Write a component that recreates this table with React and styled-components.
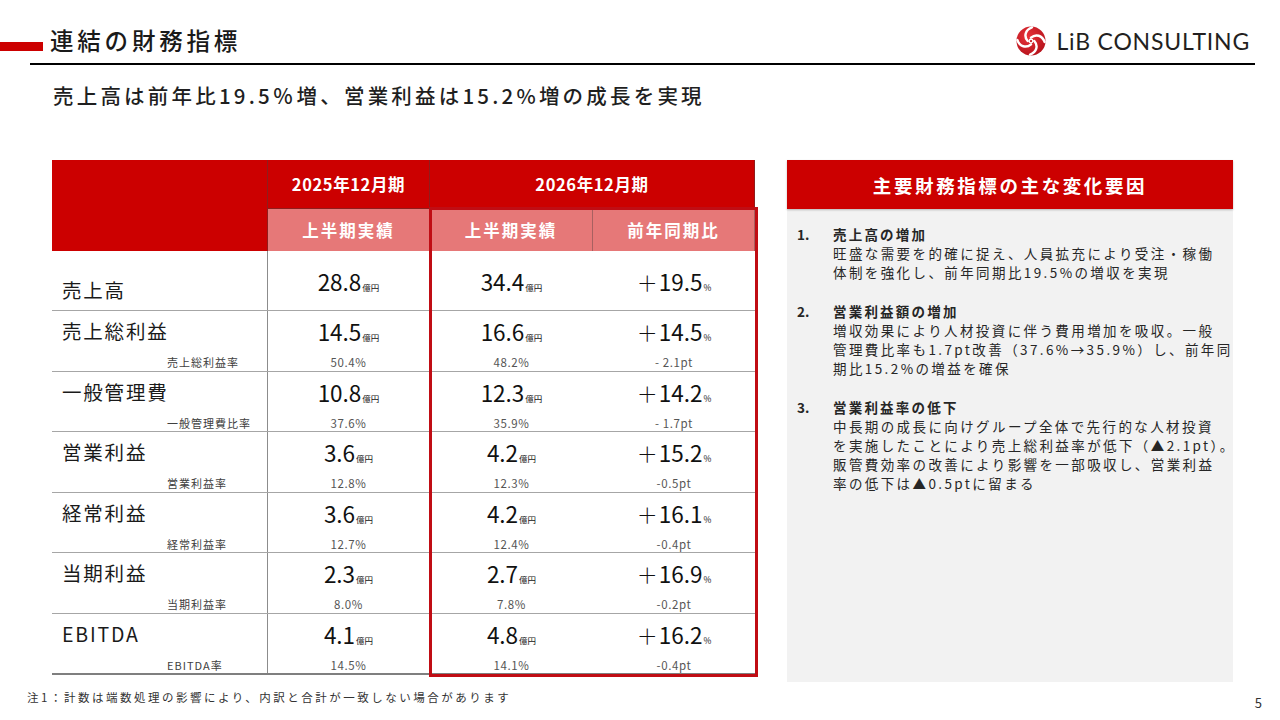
import React from "react";
import styled, { createGlobalStyle } from "styled-components";

const Global = createGlobalStyle`
  * { box-sizing: border-box; }
  html, body { margin: 0; padding: 0; background: #fff; }
  body { font-family: "Noto Sans CJK JP", "Noto Sans", sans-serif; color: #262626; }
`;

const Page = styled.div`
  width: 1280px;
  height: 720px;
  overflow: hidden;
  background: #fff;
  display: flex;
  flex-direction: column;
  position: relative;
`;

const Header = styled.header`
  height: 63px;
  display: flex;
  align-items: flex-start;
`;

const RedBar = styled.div`
  width: 43px;
  height: 9px;
  margin-top: 42px;
  background: #cc0000;
  flex: none;
`;

const Title = styled.h1`
  margin: 24px 0 0 7px;
  font-size: 23.5px;
  line-height: 32px;
  font-weight: 500;
  letter-spacing: 3.8px;
  color: #1a1a1a;
`;

const Logo = styled.div`
  margin: 26px 30px 0 auto;
  display: flex;
  align-items: center;
  gap: 10px;
  height: 30px;
`;

const LogoText = styled.span`
  font-family: "Lato", "Liberation Sans", sans-serif;
  font-size: 23px;
  letter-spacing: 0.8px;
  color: #231f20;
  line-height: 30px;
`;

const Rule = styled.div`
  margin-left: 30px;
  width: 1225px;
  height: 2px;
  background: #000;
`;

const Subtitle = styled.h2`
  margin: 15px 0 0 53px;
  font-size: 20.5px;
  line-height: 30px;
  font-weight: 500;
  letter-spacing: 3.2px;
  color: #1f1f1f;
`;

const Content = styled.main`
  margin-top: 50px;
  padding-left: 52px;
  display: flex;
  gap: 32px;
  align-items: flex-start;
`;

const TableWrap = styled.div`
  position: relative;
  width: 703px;
`;

const HeadGrid = styled.div`
  display: grid;
  grid-template-columns: 216px 162px 163px 162px;
  grid-template-rows: 48px 43px;
`;

const HeadCell = styled.div`
  grid-column: ${(p) => p.$col};
  grid-row: ${(p) => p.$row};
  background: ${(p) => (p.$light ? "#e67878" : "#cc0000")};
  color: #fff;
  display: flex;
  align-items: center;
  justify-content: center;
  font-weight: 700;
  font-size: 16.5px;
  letter-spacing: ${(p) => (p.$light ? "2px" : "0.6px")};
  border-right: 1px solid ${(p) => (p.$light ? "#a86060" : "#8f1d1d")};
  border-top: ${(p) => (p.$row === "2" ? "1px solid #8f1d1d" : "none")};
`;

const DataRow = styled.div`
  display: grid;
  grid-template-columns: 216px 162px 163px 162px;
  height: ${(p) => p.$h}px;
  border-bottom: ${(p) => (p.$last ? "2px solid #7f7f7f" : "1px solid #a6a6a6")};
`;

const LabelCell = styled.div`
  border-right: 1px solid #8c8c8c;
  display: flex;
  flex-direction: column;
  padding-left: 10px;
`;

const Label = styled.div`
  margin-top: ${(p) => (p.$single ? "24px" : "5px")};
  font-size: 19.5px;
  line-height: 30px;
  letter-spacing: 1.8px;
  color: #1a1a1a;
`;

const SubLabel = styled.div`
  margin-top: 8px;
  padding-left: 105px;
  font-size: 11px;
  line-height: 16px;
  letter-spacing: 1px;
  color: #404040;
`;

const ValCell = styled.div`
  border-right: ${(p) => (p.$sep ? "1px solid #8c8c8c" : "none")};
  display: flex;
  flex-direction: column;
  align-items: center;
  justify-content: ${(p) => (p.$single ? "center" : "flex-start")};
`;

const Value = styled.div`
  margin-top: ${(p) => (p.$single ? "0" : "5px")};
  height: 30px;
  line-height: 30px;
  font-size: 22.5px;
  color: #111;
  white-space: nowrap;
`;

const Plus = styled.span`
  font-size: 21px;
  font-weight: 300;
  margin-right: 1px;
`;

const Unit = styled.span`
  font-size: 8.5px;
  margin-left: 1px;
  letter-spacing: 0;
`;

const SubValue = styled.div`
  margin-top: 8px;
  font-size: 11.5px;
  line-height: 16px;
  letter-spacing: 0.6px;
  color: #555;
`;

const Highlight = styled.div`
  position: absolute;
  left: 377px;
  top: 47px;
  width: 329px;
  height: 470px;
  border: 3px solid #c00d14;
  pointer-events: none;
`;

const Panel = styled.aside`
  width: 446px;
  display: flex;
  flex-direction: column;
`;

const PanelHead = styled.div`
  height: 49px;
  background: #cc0000;
  color: #fff;
  display: flex;
  align-items: center;
  justify-content: center;
  font-weight: 700;
  font-size: 18.5px;
  letter-spacing: 2.6px;
  box-shadow: 0 1px 2px rgba(0, 0, 0, 0.25);
  position: relative;
`;

const PanelBody = styled.div`
  height: 473px;
  background: #f2f2f2;
  padding: 16px 0 0 10px;
  display: flex;
  flex-direction: column;
  gap: 20px;
`;

const Item = styled.div`
  display: flex;
  font-size: 13.5px;
  line-height: 19px;
  color: #262626;
`;

const ItemNum = styled.div`
  width: 36px;
  flex: none;
  font-weight: 700;
`;

const ItemBody = styled.div`
  display: flex;
  flex-direction: column;
`;

const ItemTitle = styled.div`
  font-weight: 700;
  letter-spacing: 2.2px;
`;

const ItemLine = styled.div`
  white-space: nowrap;
  letter-spacing: 2.4px;
`;

const Footer = styled.footer`
  margin-top: 7px;
  padding: 0 18px 0 27px;
  display: flex;
  justify-content: space-between;
  align-items: flex-start;
`;

const Note = styled.div`
  font-size: 11.5px;
  line-height: 16px;
  letter-spacing: 2.5px;
  color: #333;
`;

const PageNum = styled.div`
  margin-top: 6px;
  font-size: 13px;
  line-height: 16px;
  color: #333;
`;

function LogoMark() {
  return (
    <svg width="30" height="30" viewBox="0 0 32 32">
      <defs>
        <radialGradient id="lg" cx="0.4" cy="0.35" r="0.7">
          <stop offset="0" stopColor="#e8333a" />
          <stop offset="1" stopColor="#b5121b" />
        </radialGradient>
      </defs>
      <circle cx="16" cy="16" r="15.5" fill="url(#lg)" />
      {[0, 90, 180, 270].map((a) => (
        <path
          key={a}
          d="M16 12.5 C 21 8, 28 10, 30.5 17"
          stroke="#fff"
          strokeWidth="2.6"
          fill="none"
          strokeLinecap="round"
          transform={`rotate(${a} 16 16)`}
        />
      ))}
      <circle cx="16" cy="16" r="2.6" fill="#fff" />
      <circle cx="16" cy="16" r="1.2" fill="#c4161c" />
    </svg>
  );
}

const rows = [
  { label: "売上高", single: true, v: ["28.8", "34.4", "19.5"], h: 60 },
  { label: "売上総利益", sub: "売上総利益率", v: ["14.5", "16.6", "14.5"], s: ["50.4%", "48.2%", "- 2.1pt"], h: 61 },
  { label: "一般管理費", sub: "一般管理費比率", v: ["10.8", "12.3", "14.2"], s: ["37.6%", "35.9%", "- 1.7pt"], h: 60 },
  { label: "営業利益", sub: "営業利益率", v: ["3.6", "4.2", "15.2"], s: ["12.8%", "12.3%", "-0.5pt"], h: 61 },
  { label: "経常利益", sub: "経常利益率", v: ["3.6", "4.2", "16.1"], s: ["12.7%", "12.4%", "-0.4pt"], h: 60 },
  { label: "当期利益", sub: "当期利益率", v: ["2.3", "2.7", "16.9"], s: ["8.0%", "7.8%", "-0.2pt"], h: 61 },
  { label: "EBITDA", sub: "EBITDA率", v: ["4.1", "4.8", "16.2"], s: ["14.5%", "14.1%", "-0.4pt"], h: 61 },
];

const items = [
  {
    n: "1.",
    t: "売上高の増加",
    lines: ["旺盛な需要を的確に捉え、人員拡充により受注・稼働", "体制を強化し、前年同期比19.5%の増収を実現"],
  },
  {
    n: "2.",
    t: "営業利益額の増加",
    lines: [
      "増収効果により人材投資に伴う費用増加を吸収。一般",
      "管理費比率も1.7pt改善（37.6%→35.9%）し、前年同",
      "期比15.2%の増益を確保",
    ],
  },
  {
    n: "3.",
    t: "営業利益率の低下",
    lines: [
      "中長期の成長に向けグループ全体で先行的な人材投資",
      "を実施したことにより売上総利益率が低下（▲2.1pt）。",
      "販管費効率の改善により影響を一部吸収し、営業利益",
      "率の低下は▲0.5ptに留まる",
    ],
  },
];

export default function App() {
  return (
    <>
      <Global />
      <Page>
        <Header>
          <RedBar />
          <Title>連結の財務指標</Title>
          <Logo>
            <LogoMark />
            <LogoText>LiB CONSULTING</LogoText>
          </Logo>
        </Header>
        <Rule />
        <Subtitle>売上高は前年比19.5％増、営業利益は15.2%増の成長を実現</Subtitle>
        <Content>
          <TableWrap>
            <HeadGrid>
              <HeadCell $col="1" $row="1 / 3" />
              <HeadCell $col="2" $row="1">2025年12月期</HeadCell>
              <HeadCell $col="3 / 5" $row="1">2026年12月期</HeadCell>
              <HeadCell $col="2" $row="2" $light>上半期実績</HeadCell>
              <HeadCell $col="3" $row="2" $light>上半期実績</HeadCell>
              <HeadCell $col="4" $row="2" $light>前年同期比</HeadCell>
            </HeadGrid>
            {rows.map((r, i) => (
              <DataRow key={r.label} $h={r.h} $last={i === rows.length - 1}>
                <LabelCell>
                  <Label $single={r.single}>{r.label}</Label>
                  {r.sub && <SubLabel>{r.sub}</SubLabel>}
                </LabelCell>
                {r.v.map((val, j) => (
                  <ValCell key={j} $sep={j === 0} $single={r.single}>
                    <Value $single={r.single}>
                      {j === 2 && <Plus>＋</Plus>}
                      {val}
                      <Unit>{j === 2 ? "%" : "億円"}</Unit>
                    </Value>
                    {r.s && <SubValue>{r.s[j]}</SubValue>}
                  </ValCell>
                ))}
              </DataRow>
            ))}
            <Highlight />
          </TableWrap>
          <Panel>
            <PanelHead>主要財務指標の主な変化要因</PanelHead>
            <PanelBody>
              {items.map((it) => (
                <Item key={it.n}>
                  <ItemNum>{it.n}</ItemNum>
                  <ItemBody>
                    <ItemTitle>{it.t}</ItemTitle>
                    {it.lines.map((l) => (
                      <ItemLine key={l}>{l}</ItemLine>
                    ))}
                  </ItemBody>
                </Item>
              ))}
            </PanelBody>
          </Panel>
        </Content>
        <Footer>
          <Note>注1：計数は端数処理の影響により、内訳と合計が一致しない場合があります</Note>
          <PageNum>5</PageNum>
        </Footer>
      </Page>
    </>
  );
}
